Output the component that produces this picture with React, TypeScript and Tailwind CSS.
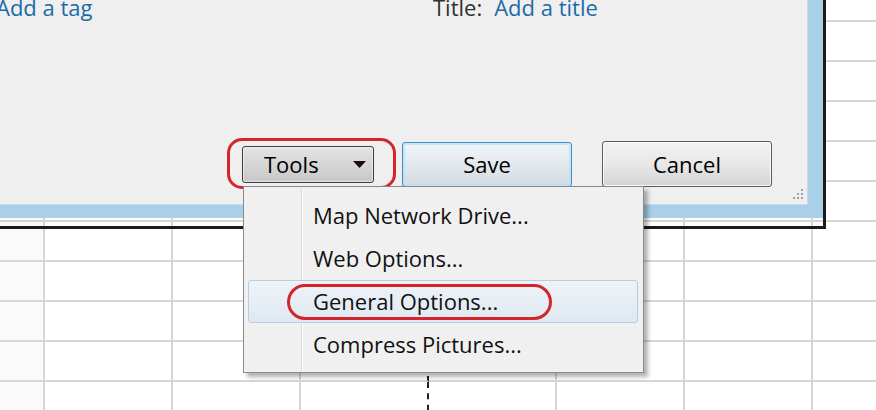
import React from 'react';

const colWidths = [45, 128, 128, 128, 128, 128, 128, 128];
const rowCount = 11;

const menuItems = [
	{ label: 'Map Network Drive...', active: false },
	{ label: 'Web Options...', active: false },
	{ label: 'General Options...', active: true },
	{ label: 'Compress Pictures...', active: false },
];

const Sheet: React.FC = () => {
	const cells = [];
	for (let r = 0; r < rowCount; r++) {
		for (let c = 0; c < colWidths.length; c++) {
			const pageBreak = c === 3;
			cells.push(
				<div
					key={`${r}-${c}`}
					className={
						pageBreak
							? 'border-r-2 border-b-2 border-b-[#d6d6d6] border-r-[#1e1e1e] [border-right-style:dashed]'
							: c === 0
								? 'border-r-2 border-b-2 border-[#d6d6d6] bg-[#fafafa]'
								: 'border-r-2 border-b-2 border-[#d6d6d6]'
					}
				/>
			);
		}
	}
	return (
		<div className="grid grid-cols-[45px_repeat(7,128px)] grid-rows-[22px_repeat(10,40px)] bg-white">
			{cells}
		</div>
	);
};

const ResizeGrip: React.FC = () => (
	<svg width="14" height="14" viewBox="0 0 14 14" className="absolute right-[3px] bottom-[3px]">
		{[
			[11, 2],
			[11, 6],
			[7, 6],
			[11, 10],
			[7, 10],
			[3, 10],
		].map(([x, y]) => (
			<rect key={`${x}-${y}`} x={x} y={y} width="2" height="2" fill="#a0a0a0" />
		))}
	</svg>
);

const App: React.FC = () => {
	return (
		<div className="relative w-[876px] h-[410px] overflow-hidden bg-white font-['Open_Sans',sans-serif]">
			<Sheet />

			{/* dialog window */}
			<div className="absolute left-0 top-0 w-[826px] h-[229px] border-r-[3px] border-b-[3px] border-[#1b1b1b]">
				<div className="h-full pr-[15px] pb-[13px] bg-[#a9cfe9]">
					<div className="relative h-full bg-[#efefef] border-r border-b border-[#c6dbea]">
						<div className="-mt-[8px] flex leading-[30px] text-[22px]">
							<span className="-ml-[4px] w-[437px] text-[#1d6ca6]">Add a tag</span>
							<span className="text-[#303030]">Title:</span>
							<span className="ml-[12px] text-[#1d6ca6]">Add a title</span>
						</div>

						<div className="mt-[119px] flex items-center justify-end pr-[35px] text-[22px] text-black">
							<div className="relative">
								<div className="absolute -left-[15px] -top-[8px] w-[169px] h-[51px] rounded-[15px] border-[3px] border-[#d3262c]" />
								<button className="flex w-[132px] h-[37px] items-center justify-between pl-[21px] pr-[7px] rounded-[3px] border border-[#3c3c3c] bg-gradient-to-b from-[#e4e4e4] to-[#c8c8c8] shadow-[inset_0_0_0_1px_rgba(255,255,255,0.5)]">
									<span className="leading-none">Tools</span>
									<svg width="13" height="7" viewBox="0 0 13 7">
										<path d="M0 0 H13 L6.5 7 Z" fill="#1a0a10" />
									</svg>
								</button>
							</div>
							<button className="ml-[28px] w-[170px] h-[45px] rounded-[3px] border border-[#3d8fc4] bg-gradient-to-b from-[#f1f5f8] via-[#e3e8ec] to-[#d3dbe1] shadow-[inset_0_0_0_2px_rgba(180,225,250,0.7)]">
								Save
							</button>
							<button className="ml-[30px] w-[170px] h-[46px] rounded-[3px] border border-[#5a5a5a] bg-gradient-to-b from-[#f2f2f2] via-[#e8e8e8] to-[#d4d4d4] shadow-[inset_0_0_0_1px_rgba(255,255,255,0.8)]">
								Cancel
							</button>
						</div>

						<ResizeGrip />
					</div>
				</div>
			</div>

			{/* tools dropdown menu */}
			<div className="absolute left-[243px] top-[186px] w-[401px] h-[187px] border border-[#8a8a8a] bg-[#f0f0f0] shadow-[4px_4px_4px_rgba(0,0,0,0.3)]">
				<div className="absolute left-[57px] top-[1px] bottom-[1px] w-px bg-[#dcdcdc]" />
				<div className="absolute left-[58px] top-[1px] bottom-[1px] w-px bg-white" />
				<div className="relative flex flex-col pt-[7px] pl-[4px] pr-[5px] text-[22px] text-[#111]">
					{menuItems.map((item) =>
						item.active ? (
							<div
								key={item.label}
								className="relative flex h-[43px] items-center pl-[64px] rounded-[3px] border border-[#b7cde3] bg-gradient-to-b from-[#eef3f8] to-[#dfe8f1]"
							>
								<div className="absolute left-[38px] top-[3px] w-[265px] h-[36px] rounded-full border-[3px] border-[#d3262c]" />
								<span className="relative">{item.label}</span>
							</div>
						) : (
							<div key={item.label} className="flex h-[43px] items-center pl-[65px]">
								{item.label}
							</div>
						)
					)}
				</div>
			</div>
		</div>
	);
};

export default App;
